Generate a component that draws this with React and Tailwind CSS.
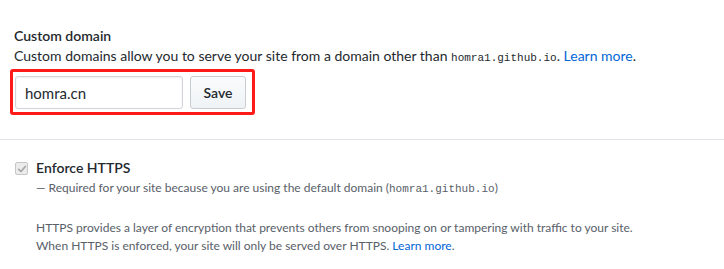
import React from 'react';

const sans = { fontFamily: '"Segoe UI", Lato, "Liberation Sans", sans-serif' };

function Mono({ children }) {
    return <code className="font-['Liberation_Mono',monospace] text-[11px]">{children}</code>;
}

function DisabledCheck() {
    return (
        <span className="mt-[4px] flex h-[13px] w-[13px] shrink-0 items-center justify-center rounded-[2px] border border-[#c6c6c6] bg-[#ececec]">
            <svg viewBox="0 0 12 12" className="h-[10px] w-[10px]">
                <path d="M2 6.5 L4.8 9 L10 3" fill="none" stroke="#a5a5a5" strokeWidth="2" strokeLinecap="round" strokeLinejoin="round" />
            </svg>
        </span>
    );
}

export default function App() {
    return (
        <div className="w-[724px] h-[269px] overflow-hidden bg-white font-['Segoe_UI',Lato,'Liberation_Sans',sans-serif] text-[#24292e]">
            {/* custom domain */}
            <div className="pl-[14px] pt-[27px] pb-[24px] border-b border-[#e1e4e8]">
                <h4 className="text-[14px] font-semibold leading-[17px]">Custom domain</h4>
                <p className="mt-[2px] text-[14px] leading-[20px] text-[#24292e]">
                    Custom domains allow you to serve your site from a domain other than <Mono>homra1.github.io</Mono>.{' '}
                    <a href="#" className="text-[#0366d6]">Learn more</a>.
                </p>
                <div className="mt-[1px] -ml-[4px] inline-flex gap-[7px] rounded-[3px] border-[3px] border-[#ff1a1a] pt-[4px] pb-[3px] pl-[2px] pr-[6px]">
                    <input
                        defaultValue="homra.cn"
                        className="h-[33px] w-[168px] rounded-[3px] border border-[#d1d5da] px-[9px] text-[15px] text-[#24292e] shadow-[inset_0_1px_2px_rgba(27,31,35,0.075)] outline-none"
                        style={sans}
                    />
                    <button className="h-[33px] w-[56px] rounded-[3px] border border-[#c9cdd2] bg-gradient-to-b from-[#fafbfc] to-[#eff3f6] text-[14px] font-semibold text-[#24292e]">
                        Save
                    </button>
                </div>
            </div>

            {/* enforce https */}
            <div className="flex gap-[8px] pl-[15px] pt-[18px]">
                <DisabledCheck />
                <div>
                    <div className="text-[14px] font-semibold leading-[20px]">Enforce HTTPS</div>
                    <p className="mt-[1px] text-[12px] leading-[18px] text-[#586069]">
                        — Required for your site because you are using the default domain (<Mono>homra1.github.io</Mono>)
                    </p>
                    <p className="mt-[21px] text-[12px] leading-[18px] text-[#586069]">
                        HTTPS provides a layer of encryption that prevents others from snooping on or tampering with traffic to your site.
                        <br />
                        When HTTPS is enforced, your site will only be served over HTTPS.{' '}
                        <a href="#" className="text-[#0366d6]">Learn more</a>.
                    </p>
                </div>
            </div>
        </div>
    );
}
